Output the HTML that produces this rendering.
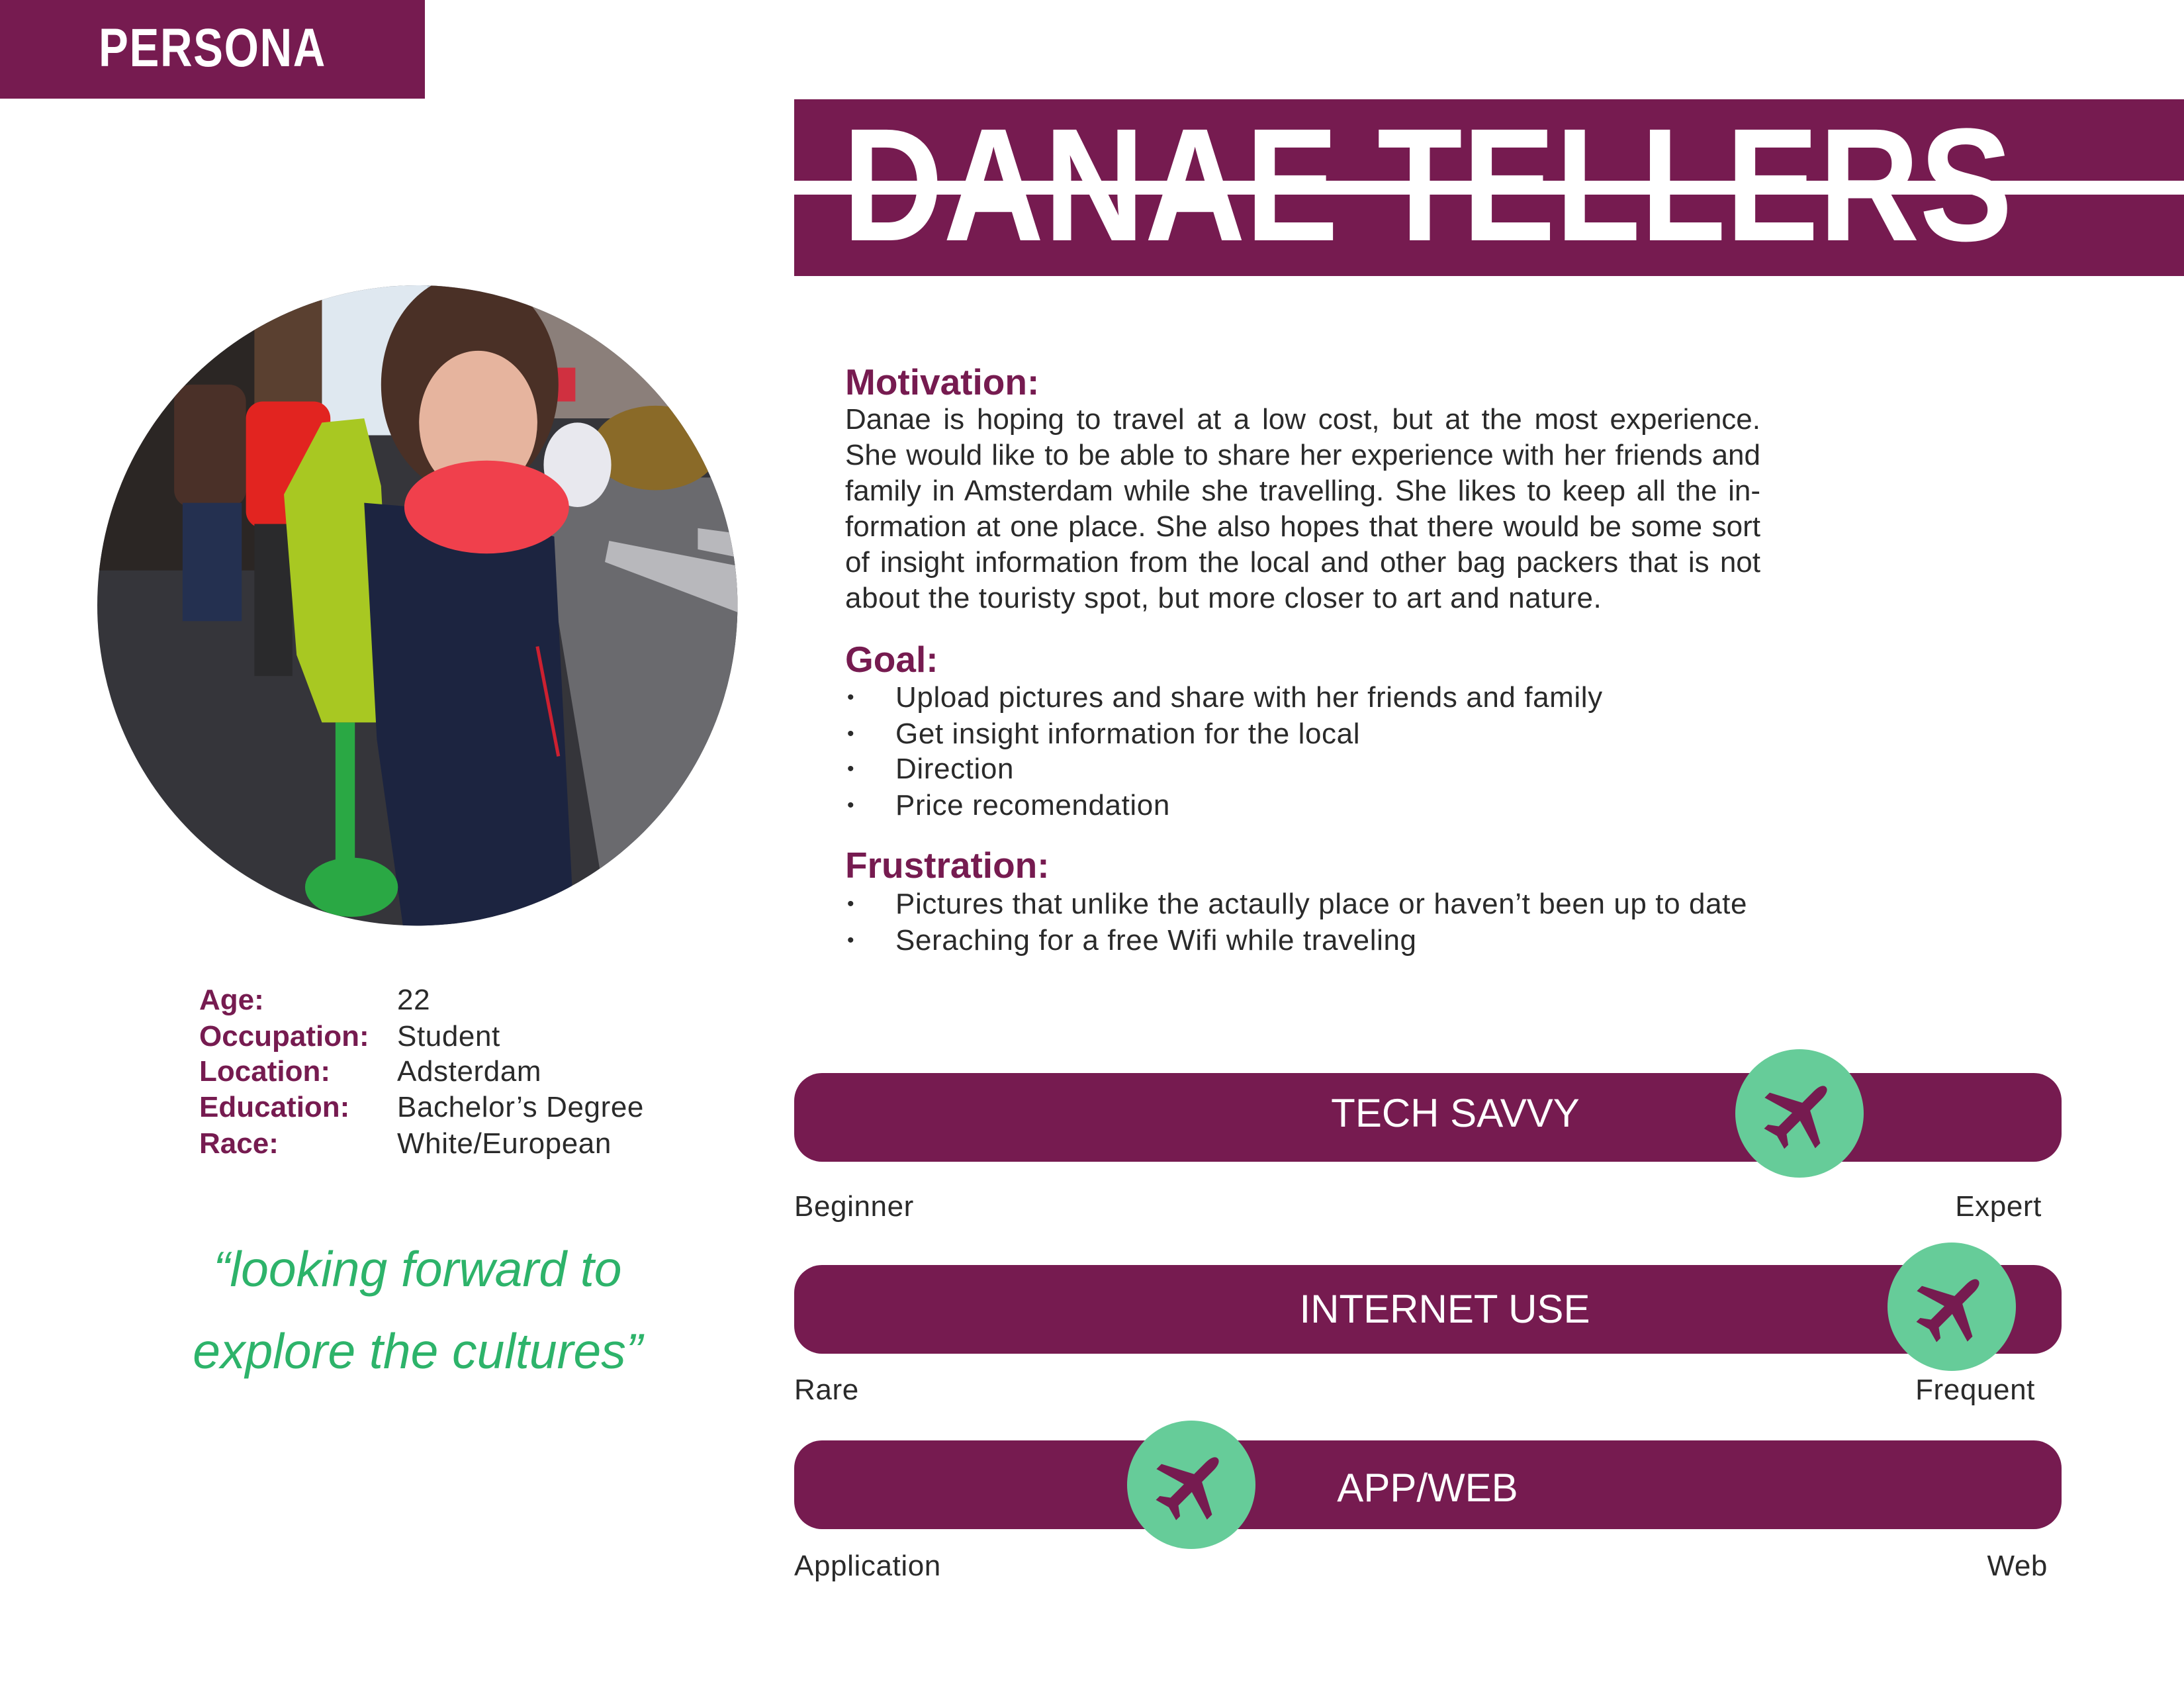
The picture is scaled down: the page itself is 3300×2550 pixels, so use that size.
<!DOCTYPE html>
<html><head><meta charset="utf-8"><style>
*{margin:0;padding:0;box-sizing:border-box}
body{width:3300px;height:2550px;background:#fff;position:relative;overflow:hidden;font-family:"Liberation Sans",sans-serif;color:#2a2a2a}
.a{position:absolute;white-space:nowrap}
.t{font-size:44px;line-height:54px;letter-spacing:0.6px}
.h{font-size:55px;line-height:60px;font-weight:bold;color:#761b50}
.lab{font-weight:bold;color:#761b50;letter-spacing:0}
.bar{position:absolute;left:1200px;width:1915px;height:134px;background:#761b50;border-radius:42px}
.bt{position:absolute;color:#fff;font-size:60px;line-height:70px;transform:translateX(-50%)}
.gc{position:absolute;width:194px;height:194px;border-radius:50%;background:#66cc99}
.gc svg{position:absolute;left:37px;top:37px;width:120px;height:120px}
.j{text-align:justify;text-align-last:justify;width:1383px;letter-spacing:0}
.dot{position:absolute;left:1280px;font-size:30px}
</style></head><body>

<div class="a" style="left:0;top:0;width:642px;height:149px;background:#761b50"></div>
<div class="a" style="left:0;top:28px;width:642px;text-align:center;color:#fff;font-weight:bold;font-size:82px;line-height:90px;letter-spacing:2px;transform:scaleX(0.82)">PERSONA</div>

<div class="a" style="left:1200px;top:150px;width:2100px;height:267px;background:#761b50"></div>
<svg class="a" style="left:1200px;top:150px" width="2100" height="267">
<text x="73" y="213" font-family="Liberation Sans" font-weight="bold" font-size="243" fill="#fff" textLength="1768" lengthAdjust="spacingAndGlyphs">DANAE TELLERS</text>
<rect x="0" y="123" width="2100" height="21" fill="#fff"/>
</svg>

<svg class="a" style="left:147px;top:431px" width="968" height="968" viewBox="28 25 1517 1517">
<defs><clipPath id="c"><circle cx="786" cy="783" r="758"/></clipPath></defs>
<g clip-path="url(#c)">
<rect x="0" y="0" width="1600" height="1600" fill="#35353a"/>
<rect x="0" y="0" width="560" height="700" fill="#2b2624"/>
<rect x="400" y="60" width="160" height="300" fill="#5a4030"/>
<rect x="560" y="0" width="250" height="380" fill="#dfe8f0"/>
<rect x="810" y="0" width="240" height="120" fill="#c8d4e0"/>
<rect x="1040" y="60" width="560" height="280" fill="#8b7f7a"/>
<polygon points="1100,480 1600,480 1600,1600 1250,1600 1100,700" fill="#6a6a6e"/>
<polygon points="1240,630 1600,700 1600,820 1230,680" fill="#b8b8bc"/>
<polygon points="1450,600 1600,620 1600,680 1450,650" fill="#b8b8bc"/>
<ellipse cx="1350" cy="410" rx="150" ry="100" fill="#8a6a28"/>
<ellipse cx="1165" cy="450" rx="80" ry="100" fill="#e8e8ee"/>
<rect x="1080" y="220" width="80" height="80" fill="#d03040"/>
<rect x="210" y="260" width="170" height="290" fill="#4a3028" rx="40"/>
<rect x="230" y="540" width="140" height="280" fill="#243050"/>
<rect x="380" y="300" width="200" height="300" fill="#e22420" rx="40"/>
<rect x="400" y="590" width="90" height="360" fill="#2a2a2c"/>
<polygon points="470,520 560,350 660,340 700,500 730,1060 560,1060 500,900" fill="#a8c822"/>
<polygon points="660,540 900,560 1110,620 1160,1600 760,1600 690,1100" fill="#1c2440"/>
<ellipse cx="910" cy="260" rx="210" ry="260" fill="#4a3026"/>
<ellipse cx="930" cy="350" rx="140" ry="170" fill="#e6b49e"/>
<ellipse cx="950" cy="550" rx="195" ry="110" fill="#f0404c"/>
<rect x="592" y="1060" width="46" height="440" fill="#2aa844"/>
<ellipse cx="630" cy="1450" rx="110" ry="70" fill="#2aa844"/>
<line x1="1070" y1="880" x2="1120" y2="1140" stroke="#cc2030" stroke-width="8"/>
</g></svg>

<div class="a t lab" style="left:301px;top:1484px">Age:</div>
<div class="a t lab" style="left:301px;top:1539px">Occupation:</div>
<div class="a t lab" style="left:301px;top:1592px">Location:</div>
<div class="a t lab" style="left:301px;top:1646px">Education:</div>
<div class="a t lab" style="left:301px;top:1701px">Race:</div>
<div class="a t" style="left:600px;top:1484px">22</div>
<div class="a t" style="left:600px;top:1539px">Student</div>
<div class="a t" style="left:600px;top:1592px">Adsterdam</div>
<div class="a t" style="left:600px;top:1646px">Bachelor’s Degree</div>
<div class="a t" style="left:600px;top:1701px">White/European</div>

<div class="a" style="left:131px;width:1000px;text-align:center;top:1872px;font-size:75px;line-height:90px;font-style:italic;color:#2db36a">“looking forward to</div>
<div class="a" style="left:131px;width:1000px;text-align:center;top:1996px;font-size:75px;line-height:90px;font-style:italic;color:#2db36a">explore the cultures”</div>

<div class="a h" style="left:1277px;top:547px">Motivation:</div>
<div class="a t j" style="left:1277px;top:607px">Danae is hoping to travel at a low cost, but at the most experience.</div>
<div class="a t j" style="left:1277px;top:661px">She would like to be able to share her experience with her friends and</div>
<div class="a t j" style="left:1277px;top:715px">family in Amsterdam while she travelling. She likes to keep all the in-</div>
<div class="a t j" style="left:1277px;top:769px">formation at one place. She also hopes that there would be some sort</div>
<div class="a t j" style="left:1277px;top:823px">of insight information from the local and other bag packers that is not</div>
<div class="a t" style="left:1277px;top:877px">about the touristy spot, but more closer to art and nature.</div>

<div class="a h" style="left:1277px;top:966px">Goal:</div>
<div class="a t dot" style="top:1027px">•</div><div class="a t" style="left:1353px;top:1027px">Upload pictures and share with her friends and family</div>
<div class="a t dot" style="top:1082px">•</div><div class="a t" style="left:1353px;top:1082px">Get insight information for the local</div>
<div class="a t dot" style="top:1135px">•</div><div class="a t" style="left:1353px;top:1135px">Direction</div>
<div class="a t dot" style="top:1190px">•</div><div class="a t" style="left:1353px;top:1190px">Price recomendation</div>

<div class="a h" style="left:1277px;top:1277px">Frustration:</div>
<div class="a t dot" style="top:1339px">•</div><div class="a t" style="left:1353px;top:1339px">Pictures that unlike the actaully place or haven’t been up to date</div>
<div class="a t dot" style="top:1394px">•</div><div class="a t" style="left:1353px;top:1394px">Seraching for a free Wifi while traveling</div>

<div class="bar" style="top:1621px"></div>
<div class="bar" style="top:1911px"></div>
<div class="bar" style="top:2176px"></div>
<div class="a bt" style="left:2199px;top:1647px">TECH SAVVY</div>
<div class="a bt" style="left:2183px;top:1943px">INTERNET USE</div>
<div class="a bt" style="left:2157px;top:2213px">APP/WEB</div>

<div class="gc" style="left:2622px;top:1585px"><svg viewBox="0 0 100 100"><path transform="rotate(45 50 50)" d="M50 3C55 3 57 10 57 18L57 38L95 58L95 67L57 56L57 80L68 88L68 95L50 90L32 95L32 88L43 80L43 56L5 67L5 58L43 38L43 18C43 10 45 3 50 3Z" fill="#761b50"/></svg></div>
<div class="gc" style="left:2852px;top:1877px"><svg viewBox="0 0 100 100"><path transform="rotate(45 50 50)" d="M50 3C55 3 57 10 57 18L57 38L95 58L95 67L57 56L57 80L68 88L68 95L50 90L32 95L32 88L43 80L43 56L5 67L5 58L43 38L43 18C43 10 45 3 50 3Z" fill="#761b50"/></svg></div>
<div class="gc" style="left:1703px;top:2146px"><svg viewBox="0 0 100 100"><path transform="rotate(45 50 50)" d="M50 3C55 3 57 10 57 18L57 38L95 58L95 67L57 56L57 80L68 88L68 95L50 90L32 95L32 88L43 80L43 56L5 67L5 58L43 38L43 18C43 10 45 3 50 3Z" fill="#761b50"/></svg></div>

<div class="a t" style="left:1200px;top:1796px">Beginner</div>
<div class="a t" style="right:215px;top:1796px">Expert</div>
<div class="a t" style="left:1200px;top:2073px">Rare</div>
<div class="a t" style="right:225px;top:2073px">Frequent</div>
<div class="a t" style="left:1200px;top:2339px">Application</div>
<div class="a t" style="right:206px;top:2339px">Web</div>
</body></html>
